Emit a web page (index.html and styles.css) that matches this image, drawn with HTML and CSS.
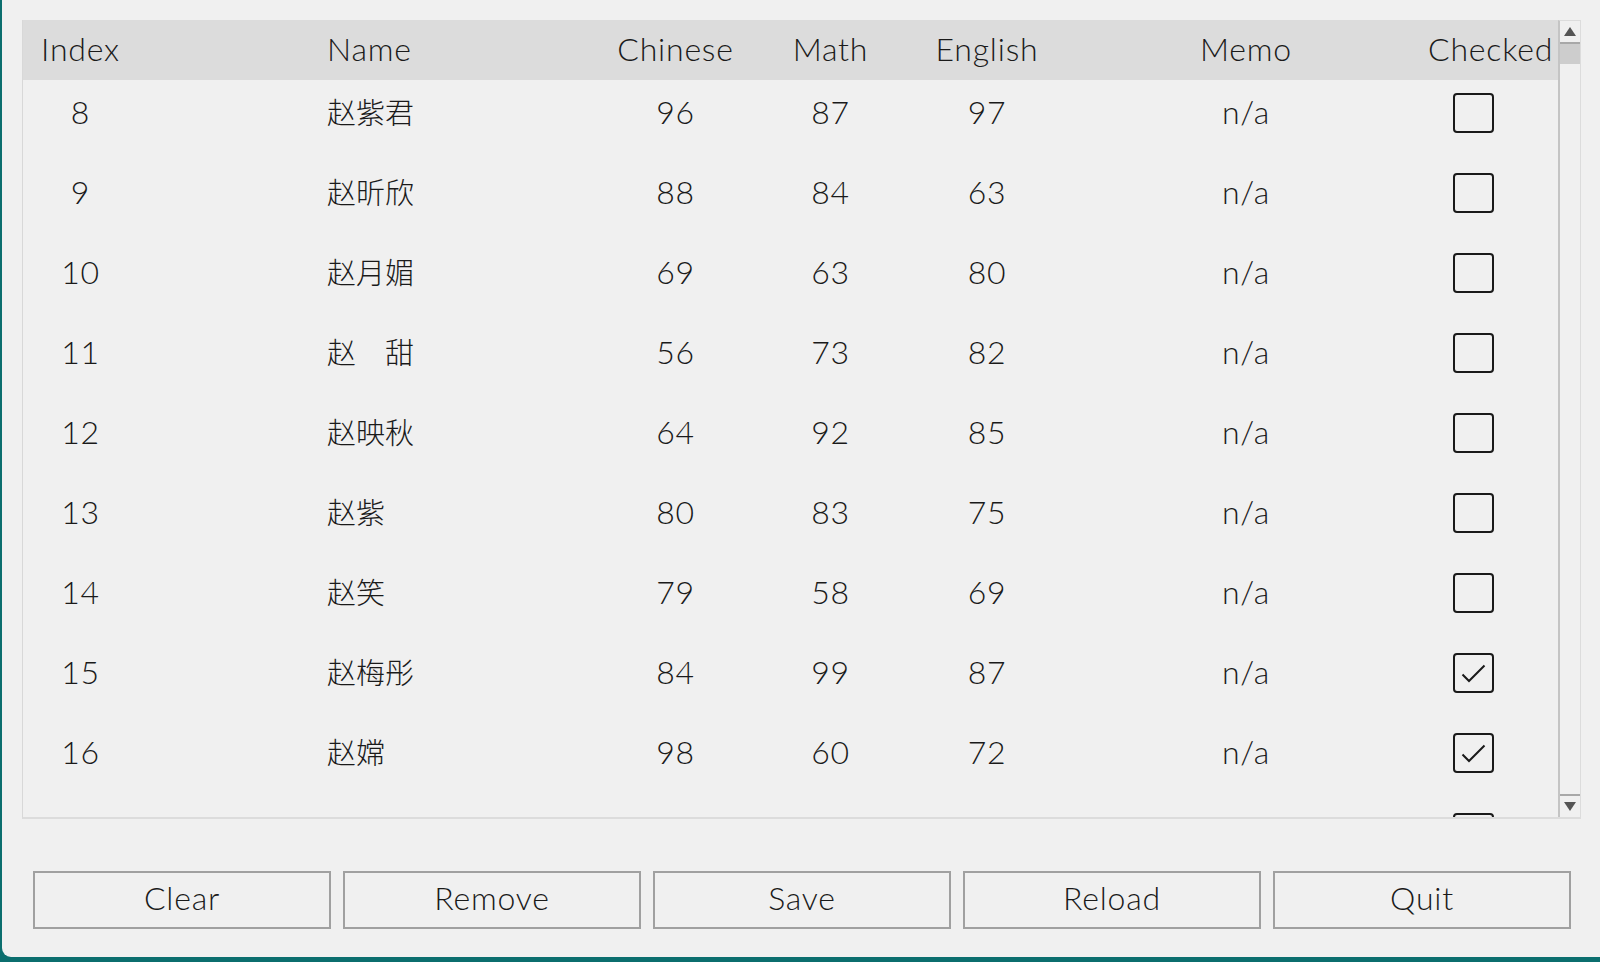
FILE: index.html
```html
<!DOCTYPE html>
<html lang="zh">
<head>
<meta charset="utf-8">
<title>Scores</title>
<link rel="stylesheet" href="styles.css">
</head>
<body>
<div class="window">
  <div class="table">
    <div class="table-main">
      <div class="row head">
        <div class="c c-index">Index</div>
        <div class="c c-name">Name</div>
        <div class="c c-mid">Chinese</div>
        <div class="c c-mid">Math</div>
        <div class="c c-mid">English</div>
        <div class="c c-mid">Memo</div>
        <div class="c c-check">Checked</div>
      </div>
      <div class="body">
        <div class="rows">
          <div class="row"><div class="c c-idx">8</div><div class="c c-name">赵紫君</div><div class="c c-mid">96</div><div class="c c-mid">87</div><div class="c c-mid">97</div><div class="c c-mid">n/a</div><div class="c c-box"><span class="box"></span></div></div>
          <div class="row"><div class="c c-idx">9</div><div class="c c-name">赵昕欣</div><div class="c c-mid">88</div><div class="c c-mid">84</div><div class="c c-mid">63</div><div class="c c-mid">n/a</div><div class="c c-box"><span class="box"></span></div></div>
          <div class="row"><div class="c c-idx">10</div><div class="c c-name">赵月媚</div><div class="c c-mid">69</div><div class="c c-mid">63</div><div class="c c-mid">80</div><div class="c c-mid">n/a</div><div class="c c-box"><span class="box"></span></div></div>
          <div class="row"><div class="c c-idx">11</div><div class="c c-name">赵　甜</div><div class="c c-mid">56</div><div class="c c-mid">73</div><div class="c c-mid">82</div><div class="c c-mid">n/a</div><div class="c c-box"><span class="box"></span></div></div>
          <div class="row"><div class="c c-idx">12</div><div class="c c-name">赵映秋</div><div class="c c-mid">64</div><div class="c c-mid">92</div><div class="c c-mid">85</div><div class="c c-mid">n/a</div><div class="c c-box"><span class="box"></span></div></div>
          <div class="row"><div class="c c-idx">13</div><div class="c c-name">赵紫</div><div class="c c-mid">80</div><div class="c c-mid">83</div><div class="c c-mid">75</div><div class="c c-mid">n/a</div><div class="c c-box"><span class="box"></span></div></div>
          <div class="row"><div class="c c-idx">14</div><div class="c c-name">赵笑</div><div class="c c-mid">79</div><div class="c c-mid">58</div><div class="c c-mid">69</div><div class="c c-mid">n/a</div><div class="c c-box"><span class="box"></span></div></div>
          <div class="row"><div class="c c-idx">15</div><div class="c c-name">赵梅彤</div><div class="c c-mid">84</div><div class="c c-mid">99</div><div class="c c-mid">87</div><div class="c c-mid">n/a</div><div class="c c-box"><span class="box"><svg viewBox="0 0 41 40" width="41" height="40"><polyline points="9.5,21.5 16,28 31.5,12.5" fill="none" stroke="#1a1a1a" stroke-width="2"/></svg></span></div></div>
          <div class="row"><div class="c c-idx">16</div><div class="c c-name">赵嫦</div><div class="c c-mid">98</div><div class="c c-mid">60</div><div class="c c-mid">72</div><div class="c c-mid">n/a</div><div class="c c-box"><span class="box"><svg viewBox="0 0 41 40" width="41" height="40"><polyline points="9.5,21.5 16,28 31.5,12.5" fill="none" stroke="#1a1a1a" stroke-width="2"/></svg></span></div></div>
          <div class="row"><div class="c c-idx"></div><div class="c c-name"></div><div class="c c-mid"></div><div class="c c-mid"></div><div class="c c-mid"></div><div class="c c-mid"></div><div class="c c-box"><span class="box"></span></div></div>
        </div>
      </div>
    </div>
    <div class="scrollbar">
      <div class="sb-btn"><span class="tri-up"></span></div>
      <div class="sb-track"><div class="sb-handle"></div></div>
      <div class="sb-btn sb-btn-down"><span class="tri-down"></span></div>
    </div>
  </div>
  <div class="buttons">
    <button class="btn">Clear</button>
    <button class="btn">Remove</button>
    <button class="btn">Save</button>
    <button class="btn">Reload</button>
    <button class="btn">Quit</button>
  </div>
</div>
</body>
</html>
```
FILE: styles.css
```css
html {
  background: #0b6e6e;
}
body {
  margin: 0;
  height: 962px;
  overflow: hidden;
  background: #0b6e6e;
  font-family: "Lato", "Noto Sans CJK SC", sans-serif;
  font-weight: 300;
  color: #1a1a1a;
}
.window {
  margin-left: 2px;
  height: 957px;
  background: #f0f0f0;
  border-bottom-left-radius: 9px;
  padding: 20px 0 0 20px;
  box-sizing: border-box;
}
.table {
  display: flex;
  width: 1559px;
  height: 799px;
  border-left: 1px solid #d8d8d8;
  border-bottom: 2px solid #dcdcdc;
  box-sizing: border-box;
}
.table-main {
  width: 1535px;
  display: flex;
  flex-direction: column;
}
.row {
  display: grid;
  grid-template-columns: 115px 462px 151px 159px 154px 364px 130px;
  height: 80px;
  align-items: center;
  font-size: 32px;
  letter-spacing: 0.8px;
}
.row.head {
  height: 60px;
  background: #dcdcdc;
  position: relative;
  z-index: 1;
}
.c {
  white-space: nowrap;
  overflow: hidden;
  padding-bottom: 4px;
}
.c-index {
  padding-left: 18px;
  overflow: visible;
}
.c-idx {
  text-align: center;
}
.c-name {
  padding-left: 189px;
  font-family: "Noto Sans CJK SC", "Lato", sans-serif;
  font-weight: 300;
  font-size: 29px;
  letter-spacing: 0;
}
.head .c-name {
  font-family: "Lato", sans-serif;
  font-size: 32px;
  letter-spacing: 0.8px;
}
.c-mid {
  text-align: center;
}
.c-check {
  text-align: left;
}
.c-box {
  padding-left: 25px;
  padding-bottom: 0;
  display: flex;
  align-items: center;
}
.body {
  flex: 1;
  overflow: hidden;
}
.rows {
  margin-top: -7px;
}
.box {
  display: block;
  width: 41px;
  height: 40px;
  box-sizing: border-box;
  border: 2px solid #1a1a1a;
  border-radius: 4px;
  position: relative;
}
.box svg {
  position: absolute;
  left: -2px;
  top: -2px;
}
.scrollbar {
  width: 23px;
  display: flex;
  flex-direction: column;
  border-left: 2px solid #c4c4c4;
  border-right: 1px solid #dcdcdc;
  border-top: 1px solid #dcdcdc;
  box-sizing: border-box;
  background: #f0f0f0;
}
.sb-btn {
  height: 21px;
  display: flex;
  align-items: center;
  justify-content: center;
  border-bottom: 2px solid #a8a8a8;
}
.sb-btn-down {
  border-bottom: none;
  border-top: 2px solid #a8a8a8;
}
.sb-track {
  flex: 1;
}
.sb-handle {
  height: 20px;
  background: #cdcdcd;
}
.tri-up {
  width: 0;
  height: 0;
  border-left: 6px solid transparent;
  border-right: 6px solid transparent;
  border-bottom: 9px solid #555;
}
.tri-down {
  width: 0;
  height: 0;
  border-left: 6px solid transparent;
  border-right: 6px solid transparent;
  border-top: 9px solid #555;
}
.buttons {
  display: flex;
  gap: 12px;
  margin: 52px 0 0 11px;
  width: 1538px;
}
.btn {
  flex: 1;
  height: 58px;
  background: #f0f0f0;
  border: 2px solid #a0a0a0;
  border-radius: 0;
  font-family: "Lato", sans-serif;
  font-weight: 300;
  font-size: 32px;
  letter-spacing: 0.8px;
  color: #1a1a1a;
  padding: 0 0 5px 0;
}
```
